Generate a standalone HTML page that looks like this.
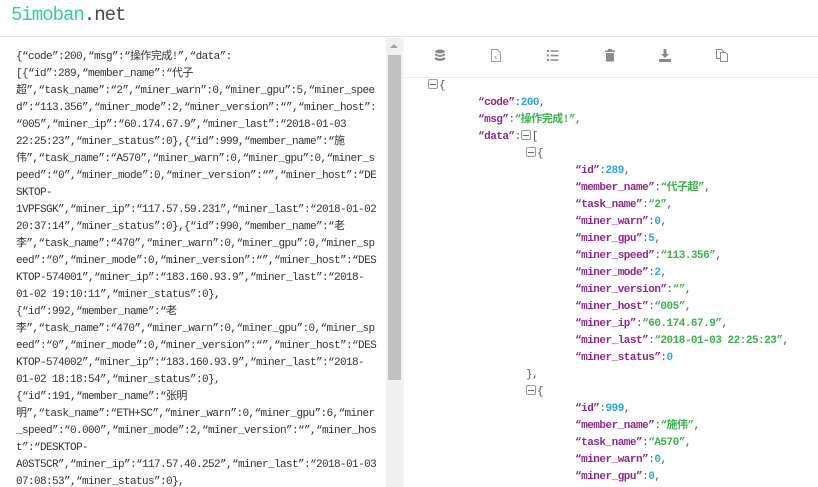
<!DOCTYPE html>
<html><head><meta charset="utf-8"><style>
*{margin:0;padding:0;box-sizing:border-box}
body{width:818px;height:487px;overflow:hidden;background:#fff;font-family:"Liberation Mono","Noto Sans CJK SC",monospace;position:relative}
.hdr{position:absolute;left:0;top:0;width:818px;height:37px;border-bottom:1px solid #e2e2e2}
.logo{position:absolute;left:11px;top:4px;font-size:19px;font-family:"Liberation Mono",monospace;letter-spacing:-1px}
.logo .a{color:#2fd0a0}.logo .b{color:#444a5a}
.left{position:absolute;left:0;top:38px;width:386px;height:449px;overflow:hidden}
.l{position:absolute;left:16px;font-size:11px;letter-spacing:-0.6px;color:#333;white-space:pre;line-height:17px}
.sb{position:absolute;left:386px;top:38px;width:16px;height:449px;background:#f0f0f0}
.sb .th{position:absolute;left:2px;top:17px;width:13px;height:325px;background:#c1c1c1}
.sb .ar{position:absolute;left:4px;top:6px;width:0;height:0;border-left:4px solid transparent;border-right:4px solid transparent;border-bottom:4px solid #a3a3a3}
.div{position:absolute;left:402px;top:38px;width:2px;height:449px;background:#f4f4f4}
.tb{position:absolute;left:404px;top:38px;width:414px;height:40px;border-bottom:1px solid #ececec}
.ic{position:absolute;top:11px;width:12px;height:13px}
.r{position:absolute;font-size:11px;letter-spacing:-0.5px;font-weight:bold;white-space:pre;line-height:17px;color:#444}
.k{color:#92278f}.n{color:#25aae1}.s{color:#3ab54a}.p{color:#555;font-weight:normal}
.tg{display:inline-block;width:10px;height:10px;border:1px solid #9a9a9a;border-radius:2px;position:relative;vertical-align:-1px;margin-right:1px;background:#fff}
.tg:after{content:"";position:absolute;left:1px;top:3.5px;width:6px;height:1px;background:#666}
</style></head><body>
<div class="hdr"><div class="logo"><span class="a">5imoban</span><span class="b">.net</span></div></div>
<div class="left">
<div class="l" style="top:11px">{“code”:200,“msg”:“操作完成!”,“data”:</div>
<div class="l" style="top:28px">[{“id”:289,“member_name”:“代子</div>
<div class="l" style="top:45px">超”,“task_name”:“2”,“miner_warn”:0,“miner_gpu”:5,“miner_spee</div>
<div class="l" style="top:62px">d”:“113.356”,“miner_mode”:2,“miner_version”:“”,“miner_host”:</div>
<div class="l" style="top:79px">“005”,“miner_ip”:“60.174.67.9”,“miner_last”:“2018-01-03</div>
<div class="l" style="top:96px">22:25:23”,“miner_status”:0},{“id”:999,“member_name”:“施</div>
<div class="l" style="top:113px">伟”,“task_name”:“A570”,“miner_warn”:0,“miner_gpu”:0,“miner_s</div>
<div class="l" style="top:130px">peed”:“0”,“miner_mode”:0,“miner_version”:“”,“miner_host”:“DE</div>
<div class="l" style="top:147px">SKTOP-</div>
<div class="l" style="top:164px">1VPFSGK”,“miner_ip”:“117.57.59.231”,“miner_last”:“2018-01-02</div>
<div class="l" style="top:181px">20:37:14”,“miner_status”:0},{“id”:990,“member_name”:“老</div>
<div class="l" style="top:198px">李”,“task_name”:“470”,“miner_warn”:0,“miner_gpu”:0,“miner_sp</div>
<div class="l" style="top:215px">eed”:“0”,“miner_mode”:0,“miner_version”:“”,“miner_host”:“DES</div>
<div class="l" style="top:232px">KTOP-574001”,“miner_ip”:“183.160.93.9”,“miner_last”:“2018-</div>
<div class="l" style="top:249px">01-02 19:10:11”,“miner_status”:0},</div>
<div class="l" style="top:266px">{“id”:992,“member_name”:“老</div>
<div class="l" style="top:283px">李”,“task_name”:“470”,“miner_warn”:0,“miner_gpu”:0,“miner_sp</div>
<div class="l" style="top:300px">eed”:“0”,“miner_mode”:0,“miner_version”:“”,“miner_host”:“DES</div>
<div class="l" style="top:317px">KTOP-574002”,“miner_ip”:“183.160.93.9”,“miner_last”:“2018-</div>
<div class="l" style="top:334px">01-02 18:18:54”,“miner_status”:0},</div>
<div class="l" style="top:351px">{“id”:191,“member_name”:“张明</div>
<div class="l" style="top:368px">明”,“task_name”:“ETH+SC”,“miner_warn”:0,“miner_gpu”:6,“miner</div>
<div class="l" style="top:385px">_speed”:“0.000”,“miner_mode”:2,“miner_version”:“”,“miner_hos</div>
<div class="l" style="top:402px">t”:“DESKTOP-</div>
<div class="l" style="top:419px">A0ST5CR”,“miner_ip”:“117.57.40.252”,“miner_last”:“2018-01-03</div>
<div class="l" style="top:436px">07:08:53”,“miner_status”:0},</div>
</div>
<div class="sb"><div class="ar"></div><div class="th"></div></div>
<div class="div"></div>
<div class="tb">
<svg class="ic" style="left:30px" viewBox="0 0 12 13"><g fill="#8a8a8a"><ellipse cx="6" cy="2.5" rx="5" ry="2"/><path d="M1 4.5q5 3 10 0v2q-5 3-10 0z"/><path d="M1 8q5 3 10 0v2.5q-5 3-10 0z"/></g></svg>
<svg class="ic" style="left:86px" viewBox="0 0 12 13"><path d="M1.5 .5h6l3 3v9h-9z" fill="none" stroke="#999"/><text x="4" y="10" font-size="6" fill="#777" font-family="Liberation Serif">x</text></svg>
<svg class="ic" style="left:143px" viewBox="0 0 12 13"><g fill="#8a8a8a"><rect x="0" y="1" width="2" height="2"/><rect x="0" y="5.5" width="2" height="2"/><rect x="0" y="10" width="2" height="2"/><rect x="3.5" y="1.3" width="8" height="1.5"/><rect x="3.5" y="5.8" width="8" height="1.5"/><rect x="3.5" y="10.3" width="8" height="1.5"/></g></svg>
<svg class="ic" style="left:200px" viewBox="0 0 12 13"><g fill="#8a8a8a"><rect x="1" y="1.5" width="10" height="1.5"/><rect x="4" y="0" width="4" height="1.5"/><path d="M2 4h8v8.5H2z"/></g></svg>
<svg class="ic" style="left:255px" viewBox="0 0 12 13"><g fill="#8a8a8a"><path d="M4.5 0h3v5h2.5L6 9 2 5h2.5z"/><rect x="0" y="10" width="12" height="3"/></g></svg>
<svg class="ic" style="left:312px" viewBox="0 0 12 13"><g fill="none" stroke="#8a8a8a"><path d="M.5 .5h5l2 2v7h-7z"/><path d="M4.5 3.5h5l2 2v7h-7z" fill="#fff"/></g></svg>
</div>
<div class="r" style="left:428px;top:78px"><span class="tg"></span><span class="p">{</span></div>
<div class="r" style="left:478px;top:95px"><span class="k">“code”</span><span class="p">:</span><span class="n">200</span><span class="p">,</span></div>
<div class="r" style="left:478px;top:112px"><span class="k">“msg”</span><span class="p">:</span><span class="s">“操作完成!”</span><span class="p">,</span></div>
<div class="r" style="left:478px;top:129px"><span class="k">“data”</span><span class="p">:</span><span class="tg"></span><span class="p">[</span></div>
<div class="r" style="left:526px;top:146px"><span class="tg"></span><span class="p">{</span></div>
<div class="r" style="left:575px;top:163px"><span class="k">“id”</span><span class="p">:</span><span class="n">289</span><span class="p">,</span></div>
<div class="r" style="left:575px;top:180px"><span class="k">“member_name”</span><span class="p">:</span><span class="s">“代子超”</span><span class="p">,</span></div>
<div class="r" style="left:575px;top:197px"><span class="k">“task_name”</span><span class="p">:</span><span class="s">“2”</span><span class="p">,</span></div>
<div class="r" style="left:575px;top:214px"><span class="k">“miner_warn”</span><span class="p">:</span><span class="n">0</span><span class="p">,</span></div>
<div class="r" style="left:575px;top:231px"><span class="k">“miner_gpu”</span><span class="p">:</span><span class="n">5</span><span class="p">,</span></div>
<div class="r" style="left:575px;top:248px"><span class="k">“miner_speed”</span><span class="p">:</span><span class="s">“113.356”</span><span class="p">,</span></div>
<div class="r" style="left:575px;top:265px"><span class="k">“miner_mode”</span><span class="p">:</span><span class="n">2</span><span class="p">,</span></div>
<div class="r" style="left:575px;top:282px"><span class="k">“miner_version”</span><span class="p">:</span><span class="s">“”</span><span class="p">,</span></div>
<div class="r" style="left:575px;top:299px"><span class="k">“miner_host”</span><span class="p">:</span><span class="s">“005”</span><span class="p">,</span></div>
<div class="r" style="left:575px;top:316px"><span class="k">“miner_ip”</span><span class="p">:</span><span class="s">“60.174.67.9”</span><span class="p">,</span></div>
<div class="r" style="left:575px;top:333px"><span class="k">“miner_last”</span><span class="p">:</span><span class="s">“2018-01-03 22:25:23”</span><span class="p">,</span></div>
<div class="r" style="left:575px;top:350px"><span class="k">“miner_status”</span><span class="p">:</span><span class="n">0</span></div>
<div class="r" style="left:526px;top:367px"><span class="p">},</span></div>
<div class="r" style="left:526px;top:384px"><span class="tg"></span><span class="p">{</span></div>
<div class="r" style="left:575px;top:401px"><span class="k">“id”</span><span class="p">:</span><span class="n">999</span><span class="p">,</span></div>
<div class="r" style="left:575px;top:418px"><span class="k">“member_name”</span><span class="p">:</span><span class="s">“施伟”</span><span class="p">,</span></div>
<div class="r" style="left:575px;top:435px"><span class="k">“task_name”</span><span class="p">:</span><span class="s">“A570”</span><span class="p">,</span></div>
<div class="r" style="left:575px;top:452px"><span class="k">“miner_warn”</span><span class="p">:</span><span class="n">0</span><span class="p">,</span></div>
<div class="r" style="left:575px;top:469px"><span class="k">“miner_gpu”</span><span class="p">:</span><span class="n">0</span><span class="p">,</span></div>
</body></html>
